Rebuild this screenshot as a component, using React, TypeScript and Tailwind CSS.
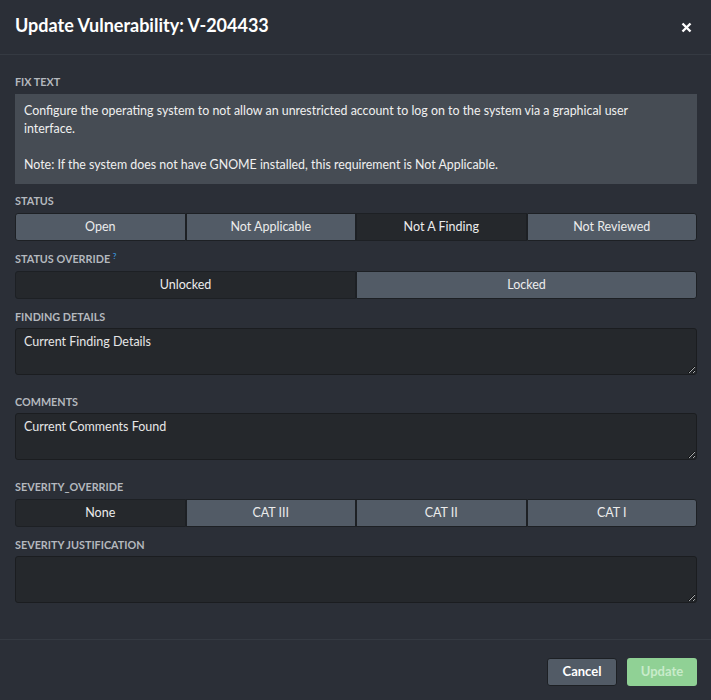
import { useState } from "react";

const labelCls =
  "block text-[10.8px] leading-[12px] font-bold uppercase text-[#b4b8be] mb-[6px]";

function SegmentGroup({
  options,
  value,
  onChange,
}: {
  options: string[];
  value: string;
  onChange: (v: string) => void;
}) {
  return (
    <div className="flex h-[28px] w-full">
      {options.map((opt, i) => {
        const active = opt === value;
        return (
          <button
            key={opt}
            type="button"
            onClick={() => onChange(opt)}
            className={
              "flex-1 border border-[#1d2024] text-[12.5px] text-[#ececec] " +
              (active ? "bg-[#25282c] " : "bg-[#525b66] ") +
              (i === 0 ? "rounded-l-[3px] " : "") +
              (i === options.length - 1 ? "rounded-r-[3px]" : "")
            }
          >
            {opt}
          </button>
        );
      })}
    </div>
  );
}

function TextField({ value }: { value: string }) {
  return (
    <textarea
      defaultValue={value}
      className="block w-full h-[47px] -mt-[1px] bg-[#25282c] border border-[#1b1d20] rounded-[3px] px-[8px] pt-[4px] text-[12.5px] leading-[18px] text-[#e6e6e6] outline-none"
    />
  );
}

export default function App() {
  const [status, setStatus] = useState("Not A Finding");
  const [lock, setLock] = useState("Unlocked");
  const [severity, setSeverity] = useState("None");

  return (
    <div
      className="w-[711px] h-[700px] bg-[#2b2f37] flex flex-col text-white"
      style={{ fontFamily: "Lato, 'Liberation Sans', sans-serif" }}
    >
      <div className="h-[55px] shrink-0 flex items-center justify-between pl-[15px] pr-[19px] pb-[4px] border-b border-[#353a42]">
        <h1 className="text-[18px] font-bold leading-[24px] text-white">
          Update Vulnerability: V-204433
        </h1>
        <button type="button" className="text-white mt-[4px]">
          <svg width="11" height="11" viewBox="0 0 11 11">
            <path d="M1.5 1.5 L9.5 9.5 M9.5 1.5 L1.5 9.5" stroke="currentColor" strokeWidth="2.4" />
          </svg>
        </button>
      </div>

      <div className="flex-1 pl-[15px] pr-[14px] pt-[21px]">
        <label className={labelCls}>Fix Text</label>
        <div className="bg-[#464c54] pl-[9px] pr-[40px] pt-[8px] pb-[10px] text-[12.4px] leading-[18px] text-[#f0f0f0]">
          <p>
            Configure the operating system to not allow an unrestricted account to log on to the system via a graphical user
            interface.
          </p>
          <p className="mt-[18px]">
            Note: If the system does not have GNOME installed, this requirement is Not Applicable.
          </p>
        </div>

        <div className="mt-[11px]">
          <label className={labelCls}>Status</label>
          <SegmentGroup
            options={["Open", "Not Applicable", "Not A Finding", "Not Reviewed"]}
            value={status}
            onChange={setStatus}
          />
        </div>

        <div className="mt-[12px]">
          <label className={labelCls}>
            Status Override <sup className="text-[#3a8fd6] text-[8px] font-bold">?</sup>
          </label>
          <SegmentGroup options={["Unlocked", "Locked"]} value={lock} onChange={setLock} />
        </div>

        <div className="mt-[12px]">
          <label className={labelCls}>Finding Details</label>
          <TextField value="Current Finding Details" />
        </div>

        <div className="mt-[21px]">
          <label className={labelCls}>Comments</label>
          <TextField value="Current Comments Found" />
        </div>

        <div className="mt-[21px]">
          <label className={labelCls}>Severity_Override</label>
          <SegmentGroup
            options={["None", "CAT III", "CAT II", "CAT I"]}
            value={severity}
            onChange={setSeverity}
          />
        </div>

        <div className="mt-[12px]">
          <label className={labelCls}>Severity Justification</label>
          <TextField value="" />
        </div>
      </div>

      <div className="h-[61px] shrink-0 border-t border-[#353a42] flex items-center justify-end gap-[10px] px-[14px] pt-[4px]">
        <button
          type="button"
          className="w-[70px] h-[28px] rounded-[3px] bg-[#525b66] border border-[#1d2024] text-[13px] font-bold text-white"
        >
          Cancel
        </button>
        <button
          type="button"
          disabled
          className="w-[70px] h-[28px] rounded-[3px] bg-[#90d195] text-[13px] font-bold text-[#c8ebca]"
        >
          Update
        </button>
      </div>
    </div>
  );
}
